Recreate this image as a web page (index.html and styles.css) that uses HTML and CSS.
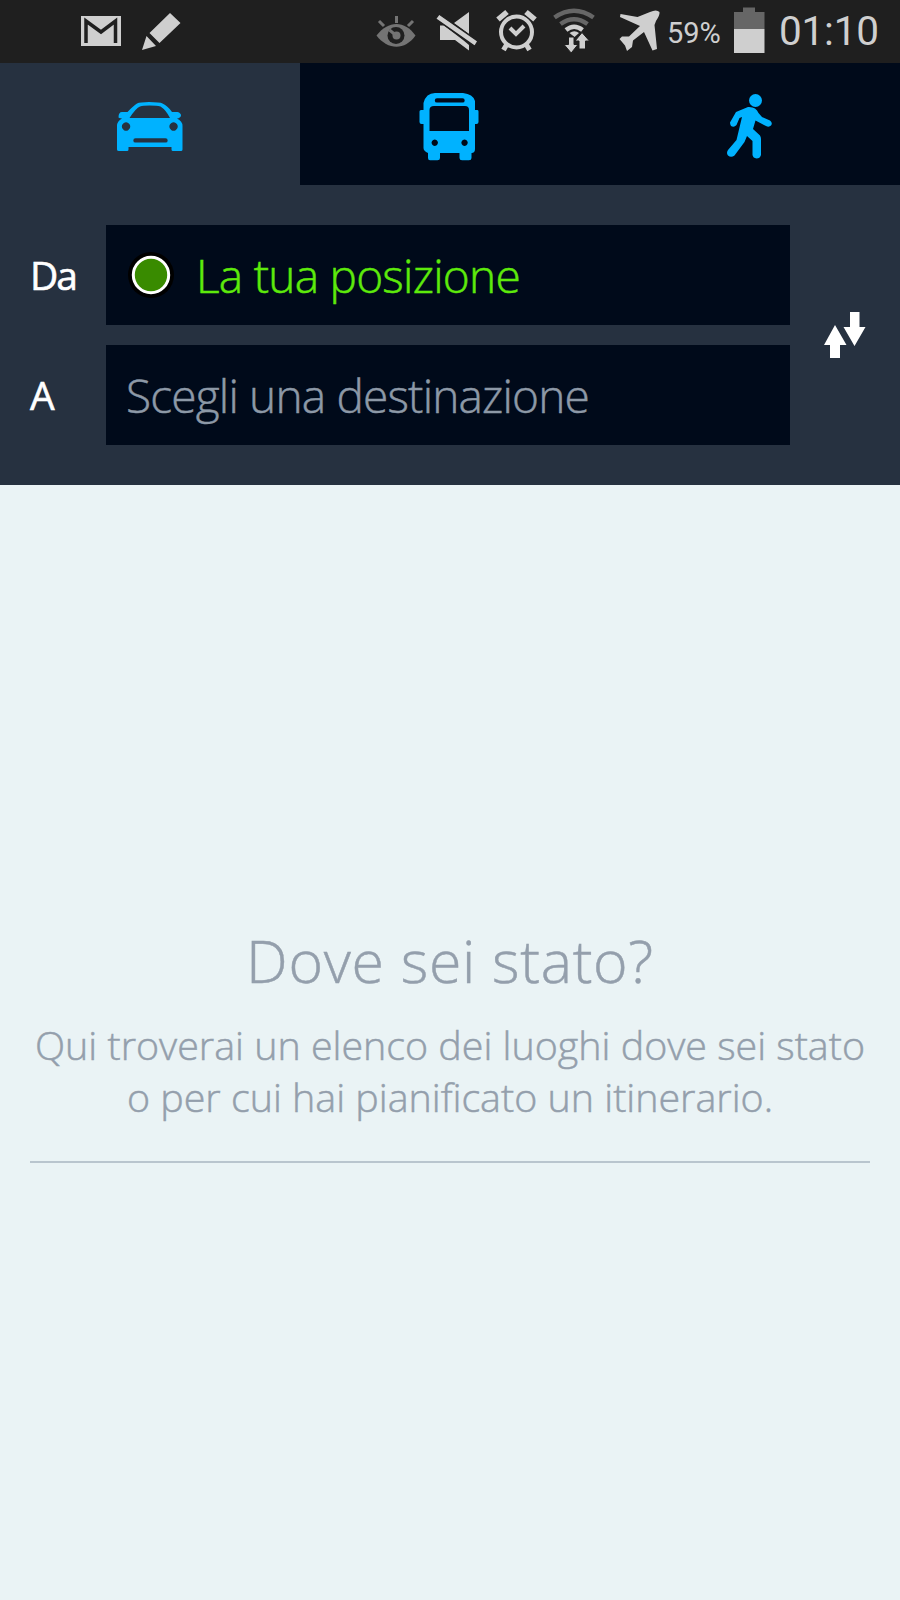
FILE: index.html
```
<!DOCTYPE html>
<html lang="it">
<head>
<meta charset="utf-8">
<title>Itinerario</title>
<link rel="stylesheet" href="styles.css">
</head>
<body>
<header class="status">
  <svg class="status-left" width="110" height="62" viewBox="75 0 110 62">
    <path fill="#cfcfcf" d="M81 16h40v30H81z"/>
    <path fill="none" stroke="#1f1f1f" stroke-width="3.500" d="M86 43V21L101 32L115.500 21V43"/>
    <path fill="#cfcfcf" d="M170 13L180.500 23L159.500 43L149.500 33ZM146.500 36L156 46L142 50Z"/>
  </svg>
  <svg class="status-right" width="292" height="62" viewBox="372 0 292 62">
    <g fill="none" stroke="#747474">
      <path stroke-width="3" d="M379 21l5 5M396.500 16v7M413 21l-5 5"/>
      <path fill="#747474" stroke="none" d="M376.500 35.500C388 20 405 20 415.500 35.500C405 50.500 388 50.500 376.500 35.500Z"/>
      <circle cx="396" cy="35.500" r="8.500" fill="#1f1f1f" stroke="none"/>
      <circle cx="396.500" cy="35.500" r="4" fill="#747474" stroke="none"/>
      <path stroke-width="3" d="M389.500 30l6 5"/>
    </g>
    <g fill="#cfcfcf">
      <path d="M469 12V34L454 23ZM440 25.500H444L463 40L469 45V50.500L455 40H440Z"/>
      <path stroke="#1f1f1f" stroke-width="1.500" d="M439 14L478 41.200L474.800 46.300L435.500 18.800Z"/>
    </g>
    <g fill="none" stroke="#cfcfcf">
      <circle cx="516.500" cy="32" r="15.500" stroke-width="4"/>
      <path stroke-width="4" d="M510 28l6 6l8-8"/>
      <path stroke-width="5.500" d="M498 19.500l9-7.500M526 12l9 7.500"/>
      <path stroke-width="5" d="M507 44l-3.500 6M526 44l3.500 6"/>
    </g>
    <g fill="none" stroke-width="4.500">
      <path stroke="#666" d="M554.500 17.500Q574 4 593.500 17.500M560.500 24Q574 14.500 587.500 24"/>
      <path stroke="#cfcfcf" d="M566 30Q574 23.500 582.500 30"/>
      <path fill="#cfcfcf" d="M569.500 33Q574.500 29.500 579 33L574.500 37Z"/>
      <path fill="#cfcfcf" stroke="#1f1f1f" stroke-width="1" d="M582 32.500L589.500 41H585.500V49H579V41H575ZM568.500 37H574V44.500H578L571.200 53L564 44.500H568.500Z"/>
    </g>
    <path fill="#cfcfcf" d="M620.500 14L637.500 17L650 12Q656.500 9 659.500 12Q660 15 656 21L654.500 25L657 49L652.500 50.500L644 32L633 40.500L632 47L627 51L625 45.500L619.500 39L622 36.500L629 36.500L640 26L620 17Z"/>
  </svg>
  <span class="battery-label">59%</span>
  <svg class="battery" width="31" height="62" viewBox="734 0 31 62">
    <path fill="#666" d="M743 7.500h12v4.500h9.500v17H734V12h9z"/>
    <path fill="#cfcfcf" d="M734 29h30.500v24H734z"/>
  </svg>
  <span class="clock">01:10</span>
</header>

<nav class="tabs">
  <div class="tab tab-active">
    <svg width="68" height="54" viewBox="116 100 68 54">
      <path fill="#00b2ff" fill-rule="evenodd" d="M118.500 117.500Q118.500 112 122 112H127.500Q133 106 137 103.500Q140 102 149 102Q160 102 162.500 103.500Q168 106 172 112H177.500Q181 113 181 115.500Q180.500 118 177 118.500Q182.500 121 182.500 126V149.500Q182.500 151 181 151H173Q171.500 151 171.500 149.500V147H128.500V149.500Q128.500 151 127 151H119Q117 151 117 149.500V126Q117 121 122 118.500Q118.500 118 118.500 117.500ZM129.500 118H170Q166 110 160.500 106.500Q157 105.500 149.500 105.500Q143 105.500 140 106.500Q136 108 129.500 118ZM126 122.300a4.200 4.200 0 1 0 .1 0ZM173.500 122.300a4.200 4.200 0 1 0 .1 0ZM135.500 138.200H165.500a2.200 2.200 0 0 1 0 4.400H135.500a2.200 2.200 0 0 1 0-4.400Z"/>
    </svg>
  </div>
  <div class="tab">
    <svg width="64" height="70" viewBox="418 91 64 70">
      <path fill="#00b2ff" fill-rule="evenodd" d="M435 93H463Q473 94 475 101V110H477.500Q478.500 110 478.500 111.500V122Q478.500 124 476.500 124H475V149Q475 153 471.500 153V158Q471.500 160.300 469 160.300H462Q459.500 160.300 459.500 158V153H440V158Q440 160.300 437.500 160.300H430Q428 160.300 428 158V153Q423.500 151 423.500 148V124H421.500Q419.500 124 419.500 122V111.500Q419.500 110 421 110H423.500V103Q426 93 435 93ZM437 98.200a2.200 2.200 0 0 0 0 4.400H462.500a2.200 2.200 0 0 0 0-4.400ZM434 106Q429.500 106 429.500 110V131H469V110Q469 106 465 106ZM434.700 139.500a3.200 3.200 0 1 0 .1 0ZM464.500 139.500a3.200 3.200 0 1 0 .1 0Z"/>
    </svg>
  </div>
  <div class="tab">
    <svg width="50" height="68" viewBox="725 92 50 68">
      <circle cx="755.500" cy="100.500" r="6.500" fill="#00b2ff"/>
      <path fill="#00b2ff" d="M736 112L748 107Q756 106.500 758.500 113L762 117L770 120.500Q773 123 771 125.500Q769 127.500 766 126L755.500 120.500L753 129L760 135.500Q761 137 761 139V155Q760 158.500 756.500 158.500Q753 158 752.500 155V141L747 136L744.500 142L734.500 155.500Q731 158 728 155.500Q726 153 728 150L736.500 140L742 117L739.500 118L736.500 125Q734 128 731 126Q730 124 730 122.500Z"/>
    </svg>
  </div>
</nav>

<section class="route">
  <div class="row">
    <span class="label">Da</span>
    <div class="field field-from">
      <svg width="48" height="50" viewBox="0 0 48 50"><circle cx="25" cy="25" r="23" fill="#000"/><circle cx="25" cy="25" r="17.700" fill="#398b00" stroke="#fff" stroke-width="3"/></svg>
      <span class="from-text">La tua posizione</span>
    </div>
  </div>
  <div class="row">
    <span class="label">A</span>
    <div class="field"><span class="to-text">Scegli una destinazione</span></div>
  </div>
  <svg class="swap" width="42" height="48" viewBox="824 311 42 48">
    <path fill="#fff" d="M835 325L846.500 345H840V358H830V345H824ZM850 312H859.500V327H865.500L854.500 346L843.500 327H850Z"/>
  </svg>
</section>

<main class="empty">
  <h1 class="title">Dove sei stato?</h1>
  <p class="desc"><span class="line">Qui troverai un elenco dei luoghi dove sei stato</span><span class="line">o per cui hai pianificato un itinerario.</span></p>
  <hr class="rule">
</main>
</body>
</html>
```

FILE: styles.css
```
* { box-sizing: border-box; }
body {
  margin: 0;
  width: 900px;
  height: 1600px;
  overflow: hidden;
  background: #eaf3f5;
  font-family: "Open Sans", "Noto Sans", sans-serif;
  font-weight: 300;
}
svg { display: block; flex: none; }
.status {
  display: flex;
  height: 63px;
  padding-left: 75px;
  background: #1f1f1f;
  color: #cfcfcf;
  font-family: Roboto, sans-serif;
  font-weight: 400;
  white-space: nowrap;
}
.status-right { margin-left: 187px; }
.battery-label {
  width: 67px;
  margin-left: 3px;
  padding-top: 2px;
  font-size: 29px;
  line-height: 62px;
}
.clock {
  margin-left: 14px;
  font-size: 40.5px;
  letter-spacing: -0.2px;
  line-height: 62px;
}
.tabs { display: flex; height: 122px; background: #000a1a; }
.tab { display: flex; width: 300px; align-items: center; justify-content: center; padding-top: 4px; }
.tab-active { padding-top: 6px; background: #263140; }
.route {
  display: grid;
  grid-template-columns: 760px 42px;
  grid-template-rows: 100px 100px;
  column-gap: 34px;
  row-gap: 20px;
  height: 300px;
  padding: 40px 30px;
  background: #263140;
}
.row { display: flex; align-items: center; grid-column: 1; }
.label {
  width: 76px;
  color: #fff;
  font-size: 39px;
  font-weight: 400;
  letter-spacing: -2px;
  line-height: 54px;
  -webkit-text-stroke: 0.6px currentColor;
}
.field {
  display: flex;
  align-items: center;
  width: 684px;
  height: 100px;
  padding-left: 20px;
  background: #000a1a;
  font-size: 46px;
  line-height: 60px;
  white-space: nowrap;
  color: #8d99a7;
  -webkit-text-stroke: 0.5px currentColor;
}
.from-text { margin-left: 22px; color: #5eea0b; padding-bottom: 1px; letter-spacing: -0.75px; }
.to-text { padding-bottom: 1px; letter-spacing: -0.82px; }
.swap { grid-column: 2; grid-row: 1 / 3; align-self: center; }
.empty { padding: 435px 30px 0; text-align: center; color: #949fac; -webkit-text-stroke: 0.5px currentColor; }
.title { margin: 0; font-size: 59px; font-weight: 300; letter-spacing: 0.7px; line-height: 80px; }
.desc { margin: 19px -30px 0; font-size: 39.4px; line-height: 52px; white-space: nowrap; }
.line { display: block; }
.rule { margin: 38px 0 0; border: 0; height: 2px; background: #b9c5ce; }
```
